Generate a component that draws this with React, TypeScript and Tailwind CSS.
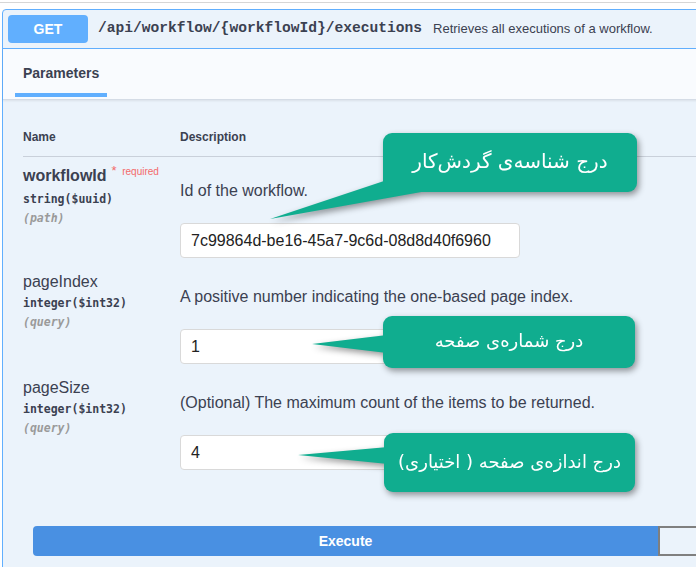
import React from 'react';

const sans = { fontFamily: '"Liberation Sans", Arial, sans-serif' };

interface Param {
    name: string;
    bold?: boolean;
    required?: boolean;
    type: string;
    where: string;
    description: string;
    value: string;
}

const params: Param[] = [
    {
        name: 'workflowId',
        bold: true,
        required: true,
        type: 'string($uuid)',
        where: '(path)',
        description: 'Id of the workflow.',
        value: '7c99864d-be16-45a7-9c6d-08d8d40f6960',
    },
    {
        name: 'pageIndex',
        type: 'integer($int32)',
        where: '(query)',
        description: 'A positive number indicating the one-based page index.',
        value: '1',
    },
    {
        name: 'pageSize',
        type: 'integer($int32)',
        where: '(query)',
        description: '(Optional) The maximum count of the items to be returned.',
        value: '4',
    },
];

function ParamRow({ p, first }: { p: Param; first: boolean }) {
    return (
        <div className={`flex pl-[20px] pb-[6px] ${first ? 'pt-[9px]' : 'pt-[8px]'}`}>
            <div className="w-[157px] shrink-0">
                <div className={`text-[16px] leading-[20px] text-[#3b4151] ${p.bold ? 'font-bold' : ''}`}>
                    {p.name}
                    {p.required && (
                        <span className="relative -top-[6px] ml-[5px] text-[10px] text-[#f36a6a] font-normal">
                            <span className="text-[13px]">*</span>&nbsp;&nbsp;required
                        </span>
                    )}
                </div>
                <div className="mt-[4px] text-[11.5px] leading-[14px] font-bold text-[#3b4151] font-['DejaVu_Sans_Mono',monospace]">
                    {p.type}
                </div>
                <div className="mt-[5px] text-[11.5px] leading-[14px] font-bold italic text-[#9a9a9a] font-['DejaVu_Sans_Mono',monospace]">
                    {p.where}
                </div>
            </div>
            <div className="flex-1">
                <div className="mt-[16px] text-[16px] leading-[18px] text-[#3b4151]">{p.description}</div>
                <div className="mt-[23px] w-[340px] h-[35px] bg-white border border-[#d9d9d9] rounded-[4px] flex items-center px-[10px] text-[16px] text-[#222]">
                    {p.value}
                </div>
            </div>
        </div>
    );
}

function Callout({ left, top, w, h, tail, text, size }: { left: number; top: number; w: number; h: number; tail: string; text: string; size: string }) {
    return (
        <div
            className="absolute drop-shadow-[2px_3px_3px_rgba(0,0,0,0.4)]"
            style={{ left, top, width: w, height: h }}
        >
            <svg className="absolute left-0 top-0 overflow-visible" width="1" height="1">
                <polygon points={tail} fill="#10ad8f" />
            </svg>
            <div
                dir="rtl"
                className={`relative w-full h-full rounded-[9px] bg-[#10ad8f] flex items-center justify-center pb-[3px] text-white font-['DejaVu_Sans',sans-serif] ${size}`}
            >
                {text}
            </div>
        </div>
    );
}

export default function App() {
    return (
        <div className="relative w-[696px] h-[567px] overflow-hidden bg-white" style={sans}>
            <div className="pt-[2px]">
                <div className="h-px bg-[#d6d6d6]" />
            </div>
            <div className="mt-[6px] ml-[2px] w-[1000px] border border-[#61affe] rounded-[4px] bg-[#ebf3fb]">
                <div className="h-[39px] border-b border-[#61affe] flex items-center pl-[5px]">
                    <div className="w-[80px] h-[28px] rounded-[4px] bg-[#61affe] text-white font-bold text-[14px] flex items-center justify-center">
                        GET
                    </div>
                    <span className="ml-[10px] font-bold text-[14.6px] text-[#3b4151] font-['Liberation_Mono',monospace]">
                        /api/workflow/{'{'}workflowId{'}'}/executions
                    </span>
                    <span className="ml-[11px] text-[13px] text-[#3b4151]">Retrieves all executions of a workflow.</span>
                </div>
                <div className="h-[51px] bg-[#f9fbfe] border-b border-[#d5dce6] shadow-[0_1px_2px_rgba(0,0,0,0.08)]">
                    <div className="ml-[12px] w-[92px] pt-[16px] pb-[11px] px-[8px] border-b-4 border-[#61affe] text-[14px] leading-[17px] font-bold text-[#3b4151]">
                        Parameters
                    </div>
                </div>
                <div className="ml-[20px] pt-[30px] pb-[12px] border-b border-[#c9d0da] flex text-[12px] leading-[14px] font-bold text-[#3b4151]">
                    <div className="w-[157px]">Name</div>
                    <div>Description</div>
                </div>
                {params.map((p, i) => (
                    <ParamRow key={p.name} p={p} first={i === 0} />
                ))}
                <div className="flex mt-[50px] pl-[30px] pb-[20px]">
                    <button className="w-[625px] h-[30px] rounded-l-[4px] bg-[#4990e2] text-white font-bold text-[14px]">
                        Execute
                    </button>
                    <button className="w-[300px] h-[30px] border-2 border-[#7f7f7f]" aria-label="Clear" />
                </div>
            </div>

            <Callout left={383} top={133} w={254} h={59} tail="-113,86 4,47 44,58" text="درج شناسه‌ی گردش‌کار" size="text-[20px]" />
            <Callout left={383} top={316} w={252} h={52} tail="-71,28 4,19 4,37" text="درج شماره‌ی صفحه" size="text-[18px]" />
            <Callout left={384} top={433} w={251} h={59} tail="-86,22 4,14 4,31" text="درج اندازه‌ی صفحه ( اختیاری)" size="text-[18px]" />
        </div>
    );
}
